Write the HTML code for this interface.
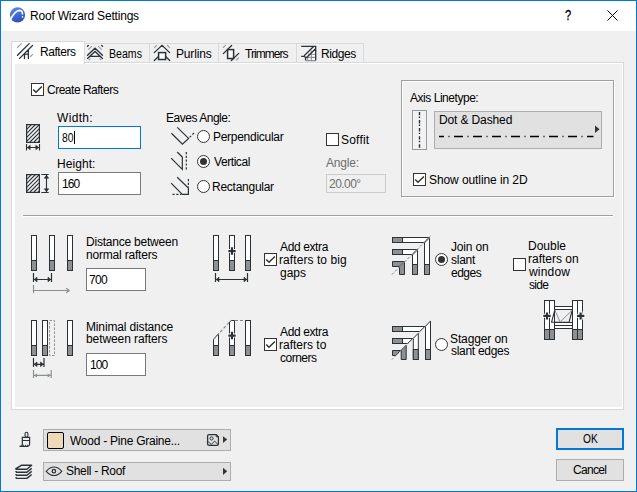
<!DOCTYPE html>
<html><head><meta charset="utf-8">
<style>
*{box-sizing:border-box;margin:0;padding:0}
html,body{width:637px;height:492px;overflow:hidden;background:#f0f0f0}
#root{position:relative;width:637px;height:492px;background:#f0f0f0;font-family:"Liberation Sans",sans-serif;font-size:12px;color:#000}
.a{position:absolute}
.t{position:absolute;white-space:nowrap;font-size:12px;line-height:14px;color:#000}
.cb{position:absolute;width:13px;height:13px;border:1px solid #333;background:#fff}
.rb{position:absolute;width:13px;height:13px;border:1px solid #333;border-radius:50%;background:#fff}
.rb.on::after{content:"";position:absolute;left:2px;top:2px;width:7px;height:7px;border-radius:50%;background:#333}
.inp{position:absolute;border:1px solid #7a7a7a;background:#fff}
.btn{position:absolute;border:1px solid #adadad;background:#e1e1e1}
svg{position:absolute;overflow:visible}
</style></head><body>
<div id="root">
<!-- window frame -->
<div class="a" style="left:0;top:0;width:637px;height:492px;border:1px solid #0078d7"></div>
<div class="a" style="left:1px;top:1px;width:635px;height:30px;background:#fff"></div>

<!-- title icon -->
<svg style="left:0;top:0" width="40" height="30" viewBox="0 0 40 30">
  <defs><linearGradient id="gb" x1="0.2" y1="0" x2="0.6" y2="1"><stop offset="0" stop-color="#5a8ae6"/><stop offset="1" stop-color="#2a4fb8"/></linearGradient></defs>
  <circle cx="17.5" cy="14.8" r="7.6" fill="url(#gb)"/>
  <path d="M10.6 19.2 C12.8 15 15.8 10.6 19.6 10.4 C21.9 10.4 22.7 12.3 22.4 14.6" fill="none" stroke="#fff" stroke-width="1.6"/>
  <circle cx="22.5" cy="16.9" r="0.8" fill="#fff"/>
</svg>
<!-- help & close -->
<div class="a" style="left:565px;top:7px;font-size:14px;line-height:16px;color:#000;-webkit-text-stroke:0.3px #000;transform:scaleX(0.8);transform-origin:0 0">?</div>
<svg style="left:607px;top:10px" width="12" height="12" viewBox="0 0 12 12"><path d="M0.5 0.5 L10.5 10.5 M10.5 0.5 L0.5 10.5" stroke="#000" stroke-width="1"/></svg>

<!-- tab panel -->
<div class="a" style="left:11px;top:62px;width:613px;height:348px;border:1px solid #d9d9d9;background:#fff"></div>
<div class="a" style="left:15px;top:64px;width:607px;height:343px;background:#f0f0f0"></div>

<!-- tabs -->
<div class="a" style="left:84px;top:43px;width:66px;height:20px;border:1px solid #d9d9d9;background:#f0f0f0"></div>
<div class="a" style="left:149px;top:43px;width:70px;height:20px;border:1px solid #d9d9d9;background:#f0f0f0"></div>
<div class="a" style="left:218px;top:43px;width:79px;height:20px;border:1px solid #d9d9d9;background:#f0f0f0"></div>
<div class="a" style="left:296px;top:43px;width:68px;height:20px;border:1px solid #d9d9d9;background:#f0f0f0"></div>
<div class="a" style="left:11px;top:41px;width:74px;height:23px;border:1px solid #d9d9d9;border-bottom:none;background:#fff"></div>


<!-- tab icons -->
<svg style="left:0;top:0" width="380" height="64" viewBox="0 0 380 64" fill="none" stroke-linecap="round">
  <!-- rafters -->
  <path d="M17.5 47.5 L21.3 43.7 M30.5 56.5 L32.5 54.5" stroke="#9a9ea2" stroke-width="1.1"/>
  <path d="M17.5 55.3 L29.2 43.6 M19.6 58.4 L32.5 45.5 M24.5 58.5 V54 M28.4 58.5 V49.8 M24.5 54.2 H28.4" stroke="#2b3237" stroke-width="1.3"/>
  <!-- beams -->
  <path d="M88.6 49.3 L91.6 46.3 M101.4 49.3 L98.4 46.3 M89 59.8 L90.2 58.6 M101 59.8 L99.8 58.6" stroke="#9a9ea2" stroke-width="1.1"/>
  <path d="M87.5 55.3 L95 48.2 L102.5 55.3 M87.5 58.4 L95 51.4 L102.5 58.4 M89.8 56.3 H100.2 M87.5 46.3 L88.3 45.5 M102.5 46.3 L101.7 45.5" stroke="#2b3237" stroke-width="1.3"/>
  <!-- purlins -->
  <path d="M154.5 47.6 L156.6 45.3 M169.5 47.6 L167.4 45.3" stroke="#9a9ea2" stroke-width="1.1"/>
  <path d="M154.3 52.6 L162 45.4 L169.7 52.6 M154.3 60.5 L158.5 56.5 M165.6 56.5 L169.7 60.5" stroke="#2b3237" stroke-width="1.3"/>
  <rect x="158.6" y="52.6" width="7" height="6.9" fill="#fff" stroke="#2b3237" stroke-width="1.5"/>
  <!-- trimmers -->
  <path d="M223.3 47.5 L225.5 45.3 M236.5 60 L238.7 57.8" stroke="#9a9ea2" stroke-width="1.1"/>
  <path d="M223.3 53.6 L231.6 45.5 M231.4 60.5 L238.7 53.4" stroke="#2b3237" stroke-width="1.3"/>
  <rect x="227.6" y="49.6" width="6" height="8.9" fill="#fff" stroke="#2b3237" stroke-width="1.5"/>
  <!-- ridges -->
  <path d="M306.5 57.8 L315.5 48.6 V60.6 H306 Z" fill="#fff" stroke="none"/>
  <path d="M304.2 55.6 L313.3 46.5 H315.5 V48.6 L306.5 57.8 Z" fill="#fff" stroke="none"/>
  <path d="M311.3 50.5 V60.6 M308 54.3 H315.5 M306.2 57.4 H315.5 M306.2 60.6 H315.5 M307.8 57 V60.6" stroke="#8a8f93" stroke-width="1.1" stroke-linecap="butt"/>
  <path d="M301.2 46.3 H315.7 V60.5 M304.2 55.8 L313.6 46.5 M306.4 57.8 L315.5 48.7 M301.2 56.4 H304.4 L305.6 57.4 V60.6" stroke="#2b3237" stroke-width="1.3" stroke-linecap="butt" stroke-linejoin="round"/>
</svg>

<!-- create rafters -->
<div class="cb" style="left:31px;top:83px"></div>
<svg style="left:31px;top:83px" width="13" height="13" viewBox="0 0 13 13"><path d="M2.2 6.4 L5 9.3 L10.9 3.4" fill="none" stroke="#333" stroke-width="1.45"/></svg>

<!-- width / height icons -->
<svg style="left:0;top:100px" width="60" height="100" viewBox="0 100 60 100" fill="none">
  <defs><clipPath id="hc1"><rect x="27" y="125" width="12" height="17"/></clipPath><clipPath id="hc2"><rect x="27" y="175" width="12" height="17"/></clipPath></defs>
  <rect x="26.6" y="124.6" width="12.8" height="17.8" stroke="#2b3237" stroke-width="1.2"/>
  <g clip-path="url(#hc1)" stroke="#2b3237" stroke-width="1.2">
    <path d="M20 132 L32 120 M20 136 L36 120 M20 140 L40 120 M22 142 L42 122 M26 142 L42 126 M30 142 L42 130 M34 142 L42 134 M38 142 L42 138"/>
  </g>
  <path d="M26.5 144 V150.5 M39.5 144 V150.5 M27 147.5 H39" stroke="#2b3237" stroke-width="1.1"/>
  <path d="M27.2 147.5 L30.2 145.3 V149.7 Z M38.8 147.5 L35.8 145.3 V149.7 Z" fill="#2b3237" stroke="#2b3237" stroke-width="0.6" stroke-linejoin="round"/>
  <rect x="26.6" y="174.6" width="12.8" height="17.8" stroke="#2b3237" stroke-width="1.2"/>
  <g clip-path="url(#hc2)" stroke="#2b3237" stroke-width="1.2">
    <path d="M20 182 L32 170 M20 186 L36 170 M20 190 L40 170 M22 192 L42 172 M26 192 L42 176 M30 192 L42 180 M34 192 L42 184 M38 192 L42 188"/>
  </g>
  <path d="M41.3 174.5 H48.7 M41.3 192.5 H48.7 M46.5 175 V192" stroke="#2b3237" stroke-width="1.1"/>
  <path d="M46.5 175.2 L44.3 178.2 H48.7 Z M46.5 191.8 L44.3 188.8 H48.7 Z" fill="#2b3237" stroke="#2b3237" stroke-width="0.6" stroke-linejoin="round"/>
</svg>

<!-- inputs -->
<div class="inp" style="left:58px;top:126px;width:83px;height:23px;border-color:#0078d7"></div>
<div class="a" style="left:74px;top:131px;width:1px;height:13px;background:#000"></div>
<div class="inp" style="left:58px;top:172px;width:83px;height:23px"></div>

<!-- eaves icons -->
<svg style="left:160px;top:120px" width="40" height="80" viewBox="160 120 40 80" fill="none" stroke="#2b3237" stroke-width="1.2">
  <path d="M171.4 133.3 L182.4 144.1 L188.6 138.4 L177.3 127.4"/>
  <path d="M189.6 137.4 L194.8 132.2" stroke-dasharray="2.2 1.8"/>
  <path d="M171.1 158.1 L182.3 169.3 V157.1 L177.2 152"/>
  <path d="M186.3 152 V170.5" stroke-dasharray="2.2 1.6"/>
  <path d="M171.1 183.1 L182.3 194.3 H188.4 V188.1 L177.2 177.3"/>
  <path d="M172.5 194.3 H181.5 M188.4 179 V187.5" stroke-dasharray="2.2 1.6"/>
</svg>
<div class="rb" style="left:197px;top:130px"></div>
<div class="rb on" style="left:197px;top:155px"></div>
<div class="rb" style="left:197px;top:180px"></div>

<!-- soffit -->
<div class="cb" style="left:326px;top:133px"></div>
<div class="inp" style="left:326px;top:174px;width:60px;height:19px;border-color:#cccccc;background:#f0f0f0"></div>

<!-- axis linetype group -->
<div class="a" style="left:402px;top:81px;width:213px;height:117px;border:1px solid #fff"></div>
<div class="a" style="left:401px;top:80px;width:213px;height:117px;border:1px solid #a0a0a0"></div>
<div class="a" style="left:412px;top:110px;width:15px;height:40px;border:1px solid #959a9e;background:#f2f2f2"></div>
<svg style="left:412px;top:110px" width="15" height="40" viewBox="0 0 15 40"><path d="M7.5 1.9 V37.8" stroke="#2b3237" stroke-width="1.4" stroke-dasharray="3.4 1.2 1.4 2.1"/></svg>
<div class="btn" style="left:434px;top:111px;width:168px;height:38px"></div>
<svg style="left:434px;top:111px" width="168" height="38" viewBox="434 111 168 38">
  <path d="M439 136.5 H593.5" stroke="#000" stroke-width="1.3" stroke-dasharray="5 4.5 1 4.5 9 4.5 1 4.5 9 4.5 1 4.5 9 4.5 1 4.5 9 4.5 1 4.5 9 4.5 1 4.5 9 4.5 1 4.5 9 4.5 1 4.5 9 4.5 1 4.5 9 4.5 1 4.5"/>
  <path d="M595 125.5 L599.5 129.3 L595 133.1 Z" fill="#333"/>
</svg>
<div class="cb" style="left:413px;top:173px"></div>
<svg style="left:413px;top:173px" width="13" height="13" viewBox="0 0 13 13"><path d="M2.2 6.4 L5 9.3 L10.9 3.4" fill="none" stroke="#333" stroke-width="1.45"/></svg>

<!-- separator -->
<div class="a" style="left:23px;top:215px;width:590px;height:1px;background:#a0a0a0"></div>
<div class="a" style="left:23px;top:216px;width:590px;height:1px;background:#fff"></div>

<!-- section 2 inputs -->
<div class="inp" style="left:86px;top:268px;width:60px;height:23px"></div>
<div class="inp" style="left:86px;top:353px;width:60px;height:23px"></div>

<!-- checkboxes / radios section 2 -->
<div class="cb" style="left:264px;top:253px"></div>
<svg style="left:264px;top:253px" width="13" height="13" viewBox="0 0 13 13"><path d="M2.2 6.4 L5 9.3 L10.9 3.4" fill="none" stroke="#333" stroke-width="1.45"/></svg>
<div class="cb" style="left:264px;top:338px"></div>
<svg style="left:264px;top:338px" width="13" height="13" viewBox="0 0 13 13"><path d="M2.2 6.4 L5 9.3 L10.9 3.4" fill="none" stroke="#333" stroke-width="1.45"/></svg>
<div class="rb on" style="left:435px;top:253px"></div>
<div class="rb" style="left:435px;top:338px"></div>
<div class="cb" style="left:513px;top:258px"></div>

<!-- bottom buttons -->
<div class="btn" style="left:43px;top:429px;width:188px;height:22px"></div>
<div class="a" style="left:47px;top:432px;width:17px;height:17px;border:1px solid #000;border-radius:2px;background:#efd9b6"></div>
<div class="btn" style="left:43px;top:462px;width:188px;height:19px"></div>
<svg style="left:0;top:420px" width="240" height="72" viewBox="0 420 240 72" fill="none" stroke="#2b3237">
  <!-- image icon -->
  <path d="M209 434.6 H216.2 L218.4 436.8 V444 Q218.4 445.4 217 445.4 H209 Q207.6 445.4 207.6 444 V436 Q207.6 434.6 209 434.6 Z" stroke-width="1.25"/>
  <path d="M216.2 434.6 V436.8 H218.4" stroke-width="0.9"/>
  <circle cx="211.5" cy="438.4" r="1.6" stroke-width="1"/>
  <path d="M208 441.3 L211.2 444.6 L214.6 441.1 L218 444.4" stroke-width="1"/>
  <path d="M223 436.2 L227.2 439.6 L223 443 Z" fill="#333" stroke="none"/>
  <path d="M223 467.7 L227.2 471.3 L223 474.9 Z" fill="#333" stroke="none"/>
  <!-- eye -->
  <path d="M46.2 471.3 Q54 462.8 61.8 471.3 Q54 479.8 46.2 471.3 Z" stroke-width="1.1"/>
  <circle cx="53.9" cy="471.2" r="1.75" stroke-width="1.3"/>
  <!-- brush -->
  <rect x="25.1" y="432.2" width="2.8" height="5" rx="1.4" stroke-width="1.1"/>
  <path d="M22.3 440.5 V437.3 H29.6 V440.5 Z M22.3 440.5 V445 Q22 446.3 19.5 446.4 H27.6 Q29.6 446 29.6 444.2 V440.5" stroke-width="1.2"/>
  <path d="M23 445.3 H28.3" stroke-width="1" stroke-dasharray="1 1"/>
  <!-- layers -->
  <path d="M21.3 465.3 H31.7 L26.8 469.3 H16.3 L15.6 468.8 Z" stroke-width="1.4" stroke-linejoin="round"/>
  <path d="M15.6 471.1 L16.6 472.3 H26.8 L31.7 468.4 M15.6 474.1 L16.6 475.3 H26.8 L31.7 471.4 M15.6 477.2 L16.6 478.4 H26.8 L31.7 474.5 " stroke-width="1.4" stroke-linejoin="round"/>
</svg>
<div class="btn" style="left:556px;top:428px;width:68px;height:22px;border:2px solid #0078d7"></div>
<div class="btn" style="left:556px;top:459px;width:68px;height:22px"></div>

<!-- section 2 icons -->
<svg style="left:0;top:220px" width="637" height="170" viewBox="0 220 637 170" fill="none" stroke-width="1">
  <defs>
    <g id="bar"><rect x="0.5" y="0.5" width="5" height="35" fill="#fff" stroke="#2b3237"/><rect x="0.5" y="25.5" width="5" height="10" fill="#8e9092" stroke="#2b3237"/></g>
    <g id="dar"><path d="M0.2 0 L3 -2.3 V2.3 Z" fill="#2b3237" stroke="#2b3237" stroke-width="0.7" stroke-linejoin="round"/></g>
  </defs>
  <!-- col1 row1 -->
  <use href="#bar" x="31" y="235"/><use href="#bar" x="49" y="235"/><use href="#bar" x="67" y="235"/>
  <path d="M33.5 273 V282 M51.5 273 V282 M34 279.5 H51" stroke="#2b3237" stroke-width="1.2"/>
  <use href="#dar" x="34" y="279.5"/><use href="#dar" transform="translate(51 279.5) scale(-1 1)"/>
  <path d="M33.5 285 V293 M34 290.5 H69" stroke="#8a8f93" stroke-width="1.2"/>
  <path d="M69.5 290.5 L66 288.2 M69.5 290.5 L66 292.8" stroke="#8a8f93" stroke-width="1.2"/>
  <!-- col1 row2 -->
  <use href="#bar" x="31" y="320"/><use href="#bar" x="42" y="320"/><use href="#bar" x="67" y="320"/>
  <rect x="49.5" y="320.5" width="5" height="35" stroke="#8f9498" stroke-dasharray="2.5 1.5"/>
  <path d="M33.5 358 V367 M44 358 V367 M34 364.3 H43.5" stroke="#2b3237" stroke-width="1.2"/>
  <use href="#dar" x="34" y="364.3"/><use href="#dar" transform="translate(43.5 364.3) scale(-1 1)"/>
  <path d="M33.5 370 V378 M51.2 370 V378 M34 375.4 H50.7" stroke="#8a8f93" stroke-width="1.2"/>
  <path d="M34 375.4 L37 373.4 V377.4 Z M50.7 375.4 L47.7 373.4 V377.4 Z" fill="#8a8f93" stroke="none"/>
  <!-- col2 row1 -->
  <use href="#bar" x="213" y="235"/><use href="#bar" x="229" y="235"/><use href="#bar" x="245" y="235"/>
  <path d="M227.5 251.1 H236.5 M232 246.5 V255.5" stroke="#fff" stroke-width="4"/><path d="M228.3 251.1 H235.7 M232 247.3 V254.7" stroke="#2b3237" stroke-width="2.2"/>
  <path d="M215.5 273 V282 M247.5 273 V282 M216 279.5 H247" stroke="#2b3237" stroke-width="1.2"/>
  <use href="#dar" x="216" y="279.5"/><use href="#dar" transform="translate(247 279.5) scale(-1 1)"/>
  <!-- col2 row2 -->
  <path d="M213.5 339.5 L218.5 333.6 V355.5 H213.5 Z" fill="#fff" stroke="#2b3237"/>
  <rect x="213.5" y="345.5" width="5" height="10" fill="#8e9092" stroke="#2b3237"/>
  <path d="M229.5 322 L231.3 320.5 H234.5 V355.5 H229.5 Z" fill="#fff" stroke="#2b3237"/>
  <rect x="229.5" y="345.5" width="5" height="10" fill="#8e9092" stroke="#2b3237"/>
  <use href="#bar" x="245" y="320"/>
  <path d="M227.5 335.6 H236.5 M232 331 V340" stroke="#fff" stroke-width="4"/><path d="M228.3 335.6 H235.7 M232 331.8 V339.2" stroke="#2b3237" stroke-width="2.2"/>
  <path d="M213.5 339.5 L229.5 322 M235 320.5 H245" stroke="#7d8286" stroke-width="1.1" stroke-dasharray="3 2"/>
  <!-- col3 row1 join -->
  <path d="M392.5 237.5 H429.5 V274.5 H424.5 V242.5 H392.5 Z" fill="#fff" stroke="#2b3237" stroke-linejoin="round"/>
  <rect x="392.5" y="237.5" width="10" height="5" fill="#8e9092" stroke="#2b3237"/>
  <rect x="424.5" y="264.5" width="5" height="10" fill="#8e9092" stroke="#2b3237"/>
  <path d="M392.5 249.5 H417.5 V274.5 H412.5 V254.5 H392.5 Z" fill="#fff" stroke="#2b3237" stroke-linejoin="round"/>
  <rect x="392.5" y="249.5" width="10" height="5" fill="#8e9092" stroke="#2b3237"/>
  <rect x="412.5" y="264.5" width="5" height="10" fill="#8e9092" stroke="#2b3237"/>
  <path d="M392.5 261.5 H404.5 V274.5 H399.5 V266.5 H392.5 Z" fill="#8e9092" stroke="#2b3237" stroke-linejoin="round"/>
  <path d="M424.5 242.5 L429.5 237.5 M412.5 254.5 L417.5 249.5 M399.5 266.5 L404.5 261.5" stroke="#767b7f" stroke-width="1.6"/>
  <path d="M392 274.5 L430.5 236" stroke="#767b7f" stroke-width="1" stroke-dasharray="2.6 1.8"/>
  <!-- col3 row2 stagger -->
  <path d="M392.5 326.5 H424.8 L419.7 331.5 H392.5 Z" fill="#fff" stroke="#2b3237"/>
  <rect x="392.5" y="326.5" width="10" height="5" fill="#8e9092" stroke="#2b3237"/>
  <path d="M425.5 326.2 L430.5 321 V359.5 H425.5 Z" fill="#fff" stroke="#2b3237"/>
  <rect x="425.5" y="349.5" width="5" height="10" fill="#8e9092" stroke="#2b3237"/>
  <path d="M392.5 338.5 H412.6 L407.6 343.5 H392.5 Z" fill="#fff" stroke="#2b3237"/>
  <rect x="392.5" y="338.5" width="10" height="5" fill="#8e9092" stroke="#2b3237"/>
  <path d="M413.3 338.3 L418.3 333.3 V359.5 H413.3 Z" fill="#fff" stroke="#2b3237"/>
  <rect x="413.3" y="349.5" width="5" height="10" fill="#8e9092" stroke="#2b3237"/>
  <path d="M392.5 350.5 H400.6 L395.6 355.5 H392.5 Z" fill="#8e9092" stroke="#2b3237"/>
  <path d="M401.2 350.2 L406.2 345.2 V359.5 H401.2 Z" fill="#8e9092" stroke="#2b3237"/>
  <path d="M392 359.5 L430.5 321" stroke="#7d8286" stroke-width="0.9" stroke-dasharray="2 1.6"/>
  <!-- window icon -->
  <rect x="554.5" y="306.5" width="18" height="3" fill="#fff" stroke="#2b3237"/>
  <rect x="554.5" y="322.5" width="18" height="3" fill="#fff" stroke="#2b3237"/>
  <rect x="554.5" y="325.5" width="18" height="3" fill="#fff" stroke="#2b3237"/>
  <rect x="544.5" y="300.5" width="10" height="39" fill="#fff" stroke="#2b3237"/>
  <rect x="544.5" y="329.5" width="10" height="10" fill="#8e9092" stroke="#2b3237"/>
  <path d="M549.5 300.5 V339.5" stroke="#2b3237"/>
  <rect x="572.5" y="300.5" width="10" height="39" fill="#fff" stroke="#2b3237"/>
  <rect x="572.5" y="329.5" width="10" height="10" fill="#8e9092" stroke="#2b3237"/>
  <path d="M577.5 300.5 V339.5" stroke="#2b3237"/>
  <path d="M554.8 310 L551.5 322.3 H569 L572.3 310" stroke="#2b3237" stroke-width="1.1" stroke-linejoin="round"/>
  <path d="M554.8 310 L560.2 322 L572.3 310" stroke="#8a8f93" stroke-width="1"/>
  <path d="M542.5 315.8 H551.5 M547 311.5 V320 M576.5 315.8 H585.5 M580.6 311.5 V320" stroke="#fff" stroke-width="4"/>
  <path d="M543.3 315.8 H550.7 M547 312.4 V319.4 M577 315.8 H584.4 M580.6 312.4 V319.4" stroke="#2b3237" stroke-width="2.2"/>
</svg>

<div class="t" style="left:30px;top:9px;letter-spacing:-0.189px;">Roof Wizard Settings</div>
<div class="t" style="left:40px;top:45px;letter-spacing:-0.433px;">Rafters</div>
<div class="t" style="left:108.8px;top:47px;transform:scaleX(0.883);transform-origin:0 0;">Beams</div>
<div class="t" style="left:176px;top:47px;letter-spacing:-0.167px;">Purlins</div>
<div class="t" style="left:245px;top:47px;letter-spacing:-0.943px;">Trimmers</div>
<div class="t" style="left:321px;top:47px;letter-spacing:-0.4px;">Ridges</div>
<div class="t" style="left:47px;top:83px;letter-spacing:-0.492px;">Create Rafters</div>
<div class="t" style="left:57px;top:111px;letter-spacing:0.32px;">Width:</div>
<div class="t" style="left:62.3px;top:131px;transform:scaleX(0.862);transform-origin:0 0;">80</div>
<div class="t" style="left:57px;top:157px;letter-spacing:0.067px;">Height:</div>
<div class="t" style="left:62px;top:177px;letter-spacing:-0.9px;">160</div>
<div class="t" style="left:166px;top:111px;letter-spacing:-0.473px;">Eaves Angle:</div>
<div class="t" style="left:213px;top:130px;letter-spacing:-0.283px;">Perpendicular</div>
<div class="t" style="left:214px;top:155px;letter-spacing:-0.429px;">Vertical</div>
<div class="t" style="left:212px;top:180px;letter-spacing:-0.26px;">Rectangular</div>
<div class="t" style="left:341px;top:133px;letter-spacing:0.2px;">Soffit</div>
<div class="t" style="left:326px;top:156px;letter-spacing:-0.2px;color:#6d6d6d">Angle:</div>
<div class="t" style="left:329px;top:177px;letter-spacing:-0.54px;color:#6d6d6d">20.00°</div>
<div class="t" style="left:410px;top:91px;letter-spacing:-0.462px;">Axis Linetype:</div>
<div class="t" style="left:439px;top:113px;letter-spacing:-0.127px;">Dot &amp; Dashed</div>
<div class="t" style="left:429px;top:173px;letter-spacing:-0.088px;">Show outline in 2D</div>
<div class="t" style="left:86px;top:235px;letter-spacing:-0.22px;">Distance between</div>
<div class="t" style="left:86px;top:248px;letter-spacing:-0.192px;">normal rafters</div>
<div class="t" style="left:89px;top:273px;letter-spacing:-0.7px;">700</div>
<div class="t" style="left:86px;top:320px;letter-spacing:-0.147px;">Minimal distance</div>
<div class="t" style="left:86px;top:332px;letter-spacing:-0.086px;">between rafters</div>
<div class="t" style="left:90px;top:358px;letter-spacing:-0.9px;">100</div>
<div class="t" style="left:280px;top:240px;letter-spacing:-0.375px;">Add extra</div>
<div class="t" style="left:279px;top:253px;letter-spacing:0.077px;">rafters to big</div>
<div class="t" style="left:280px;top:266px;letter-spacing:0.0px;">gaps</div>
<div class="t" style="left:280px;top:325px;letter-spacing:-0.375px;">Add extra</div>
<div class="t" style="left:279px;top:338px;letter-spacing:0.0px;">rafters to</div>
<div class="t" style="left:280px;top:351px;letter-spacing:-0.5px;">corners</div>
<div class="t" style="left:451px;top:240px;letter-spacing:-0.167px;">Join on</div>
<div class="t" style="left:451px;top:253px;letter-spacing:-0.25px;">slant</div>
<div class="t" style="left:451px;top:266px;letter-spacing:-0.5px;">edges</div>
<div class="t" style="left:528px;top:239px;letter-spacing:0.0px;">Double</div>
<div class="t" style="left:528px;top:252px;letter-spacing:0.0px;">rafters on</div>
<div class="t" style="left:529px;top:265px;letter-spacing:0.2px;">window</div>
<div class="t" style="left:529px;top:278px;letter-spacing:-0.667px;">side</div>
<div class="t" style="left:450px;top:332px;letter-spacing:-0.111px;">Stagger on</div>
<div class="t" style="left:451px;top:344px;letter-spacing:-0.3px;">slant edges</div>
<div class="t" style="left:70px;top:434px;letter-spacing:-0.25px;">Wood - Pine Graine...</div>
<div class="t" style="left:66px;top:464px;letter-spacing:-0.3px;">Shell - Roof</div>
<div class="t" style="left:582.7px;top:432px;transform:scaleX(0.853);transform-origin:0 0;">OK</div>
<div class="t" style="left:573px;top:463px;letter-spacing:-0.68px;">Cancel</div>
</div>
</body></html>
